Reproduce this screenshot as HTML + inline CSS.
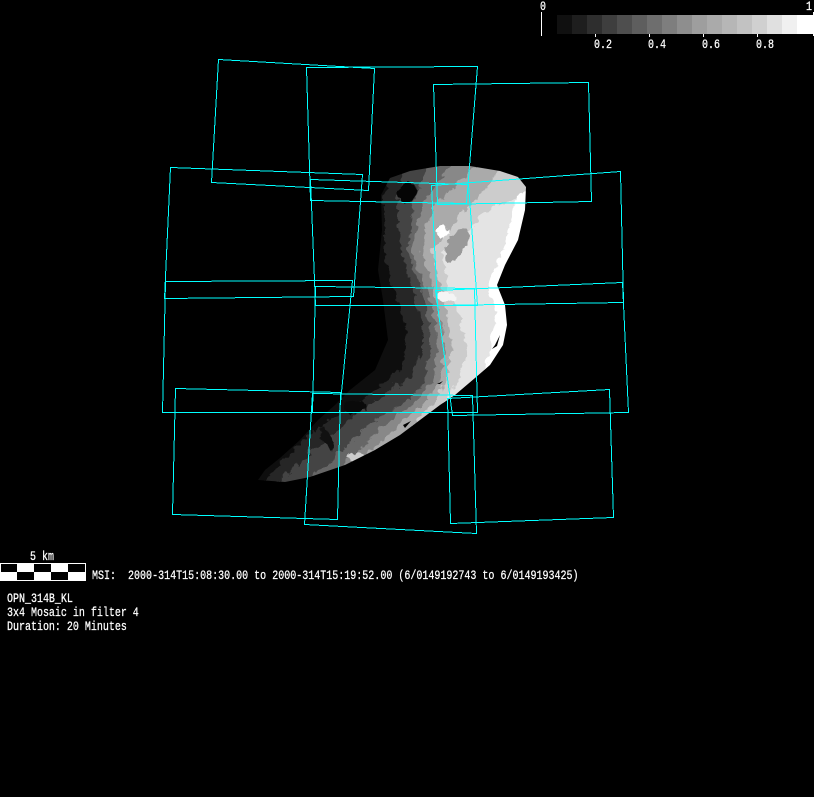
<!DOCTYPE html>
<html><head><meta charset="utf-8"><style>
html,body{margin:0;padding:0;background:#000;width:814px;height:797px;overflow:hidden}
svg{display:block}
text{font-family:"Liberation Mono",monospace;font-size:10px;fill:#fff;stroke:#fff;stroke-width:.2px;white-space:pre}
</style></head><body>
<svg width="814" height="797" viewBox="0 0 814 797" xmlns="http://www.w3.org/2000/svg">
<defs>
<clipPath id="b"><path d="M381 195L390 178L410 171L440 166L470 166L500 171L518 177L526 187L525 210L518 240L505 265L497 285L505 305L507 325L503 345L490 365L475 378L455 395L440 405L420 420L400 435L375 450L345 465L310 477L285 482L258 480L265 470L280 458L300 440L318 420L335 405L350 390L375 370L388 340L383 300L378 270L382 230Z"/></clipPath>
<filter id="s" x="0" y="0" width="100%" height="100%" filterUnits="objectBoundingBox" color-interpolation-filters="sRGB"><feTurbulence type="turbulence" baseFrequency="0.09" numOctaves="2" seed="4" result="n"/><feDisplacementMap in="SourceGraphic" in2="n" scale="8" xChannelSelector="R" yChannelSelector="G"/></filter>
</defs>
<rect width="814" height="797" fill="#000"/>
<g clip-path="url(#b)"><g filter="url(#s)">
<rect x="230" y="140" width="320" height="360" fill="#0e0e0e"/>
<path d="M392 150L382 200L382 250L392 290L405 330L400 365L370 390L340 410L310 430L285 455L250 490L560 490L560 150Z" fill="#262626"/>
<path d="M405 150L395 200L398 250L412 290L420 320L420 350L410 375L375 398L345 420L310 450L265 490L560 490L560 150Z" fill="#444"/>
<path d="M430 150L412 200L405 250L420 290L428 320L428 350L422 380L405 398L370 420L338 450L295 490L560 490L560 150Z" fill="#666"/>
<path d="M460 150L420 200L410 250L425 290L434 320L435 350L430 380L415 398L385 420L355 450L310 490L560 490L560 150Z" fill="#888"/>
<path d="M490 150L430 205L420 250L432 290L440 320L443 350L438 380L425 398L400 420L378 440L340 470L325 490L560 490L560 150Z" fill="#aaa"/>
<path d="M510 155L470 200L430 250L440 290L447 320L450 350L444 380L432 400L408 425L560 490L560 155Z" fill="#ccc"/>
<path d="M530 190L490 205L470 225L440 250L448 290L460 320L465 350L455 380L440 405L560 420L560 190Z" fill="#e4e4e4"/>
<path d="M514 195L535 185L535 240L505 285L515 330L500 370L478 385L490 340L494 310L486 285L500 250Z" fill="#fff"/>
<ellipse cx="455" cy="243" rx="9" ry="19" transform="rotate(25 455 243)" fill="#999"/>
<ellipse cx="440" cy="230" rx="6" ry="7" fill="#fff"/>
<ellipse cx="445" cy="295" rx="9" ry="5" fill="#f4f4f4"/>
<ellipse cx="353" cy="456" rx="9" ry="5" fill="#ccc"/>
<ellipse cx="405" cy="190" rx="9" ry="10" fill="#050505"/>
<ellipse cx="352" cy="405" rx="11" ry="7" fill="#0a0a0a"/>
<ellipse cx="325" cy="437" rx="4" ry="14" transform="rotate(-25 325 437)" fill="#111"/>
</g>
<path d="M495 345L500 335L497 346L492 349Z M403 425L411 421L405 428Z M437 384L441 382L443 381L440 384Z" fill="#000"/>
</g>
<g fill="none" stroke="#0ff" stroke-width="1" shape-rendering="crispEdges">
<polygon points="218.5,59.5 374.5,68.5 368.5,190.5 211.5,182.5"/>
<polygon points="306.5,67.5 477.5,66.5 466.5,203.5 310.5,200.5"/>
<polygon points="433.5,84.5 588.5,82.5 591.5,201.5 437.5,204.5"/>
<polygon points="170.5,167.5 362.5,174.5 353.5,296.5 164.5,298.5"/>
<polygon points="431.5,185.5 620.5,171.5 623.5,302.5 437.5,305.5"/>
<polygon points="310.5,179.5 468.5,184.5 477.5,305.5 315.5,305.5"/>
<polygon points="165.5,281.5 352.5,280.5 339.5,412.5 162.5,412.5"/>
<polygon points="315.5,286.5 474.5,288.5 477.5,412.5 312.5,412.5"/>
<polygon points="435.5,290.5 622.5,282.5 628.5,412.5 452.5,415.5"/>
<polygon points="175.5,388.5 340.5,392.5 337.5,519.5 172.5,514.5"/>
<polygon points="312.5,393.5 472.5,395.5 476.5,533.5 304.5,524.5"/>
<polygon points="447.5,398.5 609.5,389.5 613.5,517.5 450.5,523.5"/>
</g>
<g shape-rendering="crispEdges">
<rect x="557" y="15" width="15" height="19" fill="#101010"/><rect x="572" y="15" width="15" height="19" fill="#1e1e1e"/>
<rect x="587" y="15" width="15" height="19" fill="#2e2e2e"/><rect x="602" y="15" width="15" height="19" fill="#3e3e3e"/>
<rect x="617" y="15" width="15" height="19" fill="#4e4e4e"/><rect x="632" y="15" width="15" height="19" fill="#5e5e5e"/>
<rect x="647" y="15" width="15" height="19" fill="#6e6e6e"/><rect x="662" y="15" width="15" height="19" fill="#7e7e7e"/>
<rect x="677" y="15" width="15" height="19" fill="#8e8e8e"/><rect x="692" y="15" width="15" height="19" fill="#9e9e9e"/>
<rect x="707" y="15" width="15" height="19" fill="#aaaaaa"/><rect x="722" y="15" width="15" height="19" fill="#b6b6b6"/>
<rect x="737" y="15" width="15" height="19" fill="#c2c2c2"/><rect x="752" y="15" width="15" height="19" fill="#d0d0d0"/>
<rect x="767" y="15" width="15" height="19" fill="#e0e0e0"/><rect x="782" y="15" width="15" height="19" fill="#f0f0f0"/>
<rect x="797" y="15" width="16" height="19" fill="#fff"/>
<rect x="541" y="12" width="1" height="24" fill="#fff"/><rect x="813" y="12" width="1" height="24" fill="#fff"/>
<rect x="595" y="34" width="1" height="3" fill="#fff"/><rect x="649" y="34" width="1" height="3" fill="#fff"/>
<rect x="703" y="34" width="1" height="3" fill="#fff"/><rect x="757" y="34" width="1" height="3" fill="#fff"/>
<rect x="0" y="563" width="86" height="18" fill="#fff"/>
<rect x="1" y="564" width="16" height="8" fill="#000"/><rect x="34" y="564" width="17" height="8" fill="#000"/><rect x="68" y="564" width="17" height="8" fill="#000"/>
<rect x="17" y="572" width="17" height="8" fill="#000"/><rect x="51" y="572" width="17" height="8" fill="#000"/>
</g>
<text transform="translate(540,10) scale(1,1.3)">0</text>
<text transform="translate(806,10) scale(1,1.3)">1</text>
<text transform="translate(594,48) scale(1,1.3)">0.2</text>
<text transform="translate(648,48) scale(1,1.3)">0.4</text>
<text transform="translate(702,48) scale(1,1.3)">0.6</text>
<text transform="translate(756,48) scale(1,1.3)">0.8</text>
<text transform="translate(30,560) scale(1,1.3)">5 km</text>
<text transform="translate(92,579) scale(1.002,1.3)">MSI:  2000-314T15:08:30.00 to 2000-314T15:19:52.00 (6/0149192743 to 6/0149193425)</text>
<text transform="translate(7,602) scale(1,1.3)">OPN_314B_KL</text>
<text transform="translate(7,616) scale(1,1.3)">3x4 Mosaic in filter 4</text>
<text transform="translate(7,630) scale(1,1.3)">Duration: 20 Minutes</text>
</svg>
</body></html>
